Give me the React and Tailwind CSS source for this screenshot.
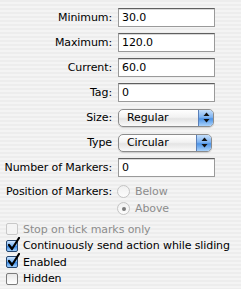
import React from 'react';

const font = { fontFamily: '"DejaVu Sans", "Lucida Grande", sans-serif' };

function TextField({ value }) {
  return (
    <div className="flex h-[19px] w-[97px] items-center border border-[#9a9a9a] border-t-[#5f5f5f] bg-white pl-[3px] text-[11px] leading-none text-black shadow-[inset_0_1px_0_#d8d8d8]">
      {value}
    </div>
  );
}

function Popup({ value, width }) {
  return (
    <div
      className={`flex h-[18px] ${width} items-stretch overflow-hidden rounded-[5px] border border-[#8c8c8c] bg-[linear-gradient(to_bottom,#ffffff_0%,#f2f2f2_45%,#e4e4e4_55%,#fafafa_100%)] shadow-[0_1px_1px_rgba(0,0,0,0.15)]`}
    >
      <div className="flex flex-1 items-center pl-[8px] text-[11px] leading-none text-black">{value}</div>
      <div className="flex w-[15px] items-center justify-center border-l border-[#5a7fb8] bg-[linear-gradient(to_bottom,#c4defa_0%,#7fb4f2_45%,#4d93e6_55%,#a9d2fb_100%)]">
        <svg width="7" height="11" viewBox="0 0 7 11">
          <path d="M3.5 0.5 L6.5 4 L0.5 4 Z" fill="#111" />
          <path d="M3.5 10.5 L6.5 7 L0.5 7 Z" fill="#111" />
        </svg>
      </div>
    </div>
  );
}

function Radio({ label, selected }) {
  return (
    <div className="flex h-[17px] items-center gap-[5px]">
      <div className="flex h-[13px] w-[13px] items-center justify-center rounded-full border border-[#c4c4c4] bg-[linear-gradient(to_bottom,#f0f0f0,#fcfcfc)]">
        {selected && <div className="h-[4px] w-[4px] rounded-full bg-[#7a7a7a]" />}
      </div>
      <span className="whitespace-nowrap text-[11px] leading-none text-[#8c8c8c]">{label}</span>
    </div>
  );
}

function Checkbox({ label, checked, disabled }) {
  return (
    <div className="flex h-[16.5px] items-center gap-[5px]">
      <div className="relative h-[12px] w-[12px] shrink-0">
        {checked ? (
          <div className="h-[12px] w-[12px] rounded-[2px] border border-[#26466e] bg-[linear-gradient(to_bottom,#cfe6ff_0%,#7ab6f5_45%,#3d8be6_55%,#9fd0ff_100%)]" />
        ) : (
          <div
            className={`h-[12px] w-[12px] rounded-[2px] border ${
              disabled ? 'border-[#c8c8c8] bg-[#f4f4f4]' : 'border-[#7c7c7c] bg-[linear-gradient(to_bottom,#e8e8e8,#ffffff)]'
            }`}
          />
        )}
        {checked && (
          <svg className="absolute left-[1px] top-[-3px]" width="13" height="14" viewBox="0 0 13 14">
            <path d="M2 8 L5 12 L12 1" fill="none" stroke="#000" strokeWidth="2.2" strokeLinecap="round" strokeLinejoin="round" />
          </svg>
        )}
      </div>
      <span className={`whitespace-nowrap text-[11px] leading-none ${disabled ? 'text-[#8c8c8c]' : 'text-black'}`}>{label}</span>
    </div>
  );
}

function Row({ label, children }) {
  return (
    <div className="grid h-[19px] grid-cols-[112px_1fr] items-center gap-x-[6px]">
      <div className="whitespace-nowrap text-right text-[11px] leading-none text-black">{label}</div>
      <div className="flex items-center">{children}</div>
    </div>
  );
}

export default function App() {
  return (
    <div
      style={font}
      className="h-[289px] w-[241px] overflow-hidden bg-[repeating-linear-gradient(to_bottom,#ededed_0px,#ededed_2px,#f4f4f4_2px,#f4f4f4_4px)] pt-[8px] tracking-[-0.1px]"
    >
      <div className="flex flex-col gap-[6px]">
        <Row label="Minimum:">
          <TextField value="30.0" />
        </Row>
        <Row label="Maximum:">
          <TextField value="120.0" />
        </Row>
        <Row label="Current:">
          <TextField value="60.0" />
        </Row>
        <Row label="Tag:">
          <TextField value="0" />
        </Row>
        <Row label="Size:">
          <Popup value="Regular" width="w-[96px]" />
        </Row>
        <Row label="Type">
          <Popup value="Circular" width="w-[94px]" />
        </Row>
        <Row label="Number of Markers:">
          <TextField value="0" />
        </Row>
      </div>

      <div className="mt-[6px] grid grid-cols-[112px_1fr] gap-x-[5px]">
        <div className="flex h-[17px] items-center justify-end whitespace-nowrap text-[11px] leading-none text-black">
          Position of Markers:
        </div>
        <div className="flex flex-col">
          <Radio label="Below" />
          <Radio label="Above" selected />
        </div>
      </div>

      <div className="mt-[4px] flex flex-col pl-[6px]">
        <Checkbox label="Stop on tick marks only" disabled />
        <Checkbox label="Continuously send action while sliding" checked />
        <Checkbox label="Enabled" checked />
        <Checkbox label="Hidden" />
      </div>
    </div>
  );
}
